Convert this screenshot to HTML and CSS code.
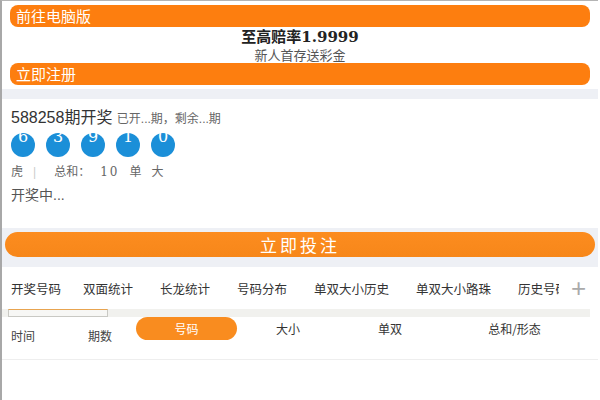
FILE: index.html
```html
<!DOCTYPE html>
<html lang="zh">
<head>
    <meta charset="UTF-8">
    <meta name="viewport" content="width=device-width, initial-scale=1.0">
    <title>开奖</title>
    <link rel="stylesheet" href="styles.css">
</head>
<body>
    <div class="page">
        <div class="top">
            <div class="bar-link">前往电脑版</div>
            <div class="promo">
                <div class="promo-title">至高赔率<span class="num">1.9999</span></div>
                <div class="promo-sub">新人首存送彩金</div>
            </div>
            <div class="bar-link">立即注册</div>
        </div>

        <div class="draw">
            <div class="draw-title">588258期开奖 <span class="draw-note">已开...期，剩余...期</span></div>
            <div class="balls">
                <span class="ball">6</span>
                <span class="ball">3</span>
                <span class="ball">9</span>
                <span class="ball">1</span>
                <span class="ball">0</span>
            </div>
            <div class="stats">
                <span>虎</span>
                <span class="sep">|</span>
                <span>总和：</span>
                <span class="serif">10</span>
                <span>单</span>
                <span>大</span>
            </div>
            <div class="status">开奖中...</div>
        </div>

        <div class="bet-wrap">
            <div class="bet-btn">立即投注</div>
        </div>

        <div class="tabs">
            <div class="tab-list">
                <span class="tab active">开奖号码</span>
                <span class="tab">双面统计</span>
                <span class="tab">长龙统计</span>
                <span class="tab">号码分布</span>
                <span class="tab">单双大小历史</span>
                <span class="tab">单双大小路珠</span>
                <span class="tab">历史号码</span>
            </div>
            <div class="tab-more">+</div>
        </div>
        <div class="scroll">
            <div class="scroll-thumb"></div>
        </div>

        <div class="table-head">
            <div class="cell low">时间</div>
            <div class="cell low">期数</div>
            <div class="cell center"><span class="pill">号码</span></div>
            <div class="cell center">大小</div>
            <div class="cell center">单双</div>
            <div class="cell center">总和/形态</div>
        </div>
    </div>
</body>
</html>
```

FILE: styles.css
```css
body {
    margin: 0;
    background: #ffffff;
    font-family: "Liberation Sans", "Noto Sans CJK SC", sans-serif;
    color: #333;
}

.page {
    border-left: 2px solid #a8a8a8;
    border-top: 1px solid #b4b4b4;
    margin-right: 2px;
    height: 399px;
    overflow: hidden;
}

.top {
    padding: 4px 8px 4px 8px;
}

.bar-link {
    background: #fd7e0f;
    color: #fff;
    height: 22px;
    line-height: 22px;
    border-radius: 8px;
    padding-left: 6px;
    font-size: 15px;
    font-family: "Noto Sans CJK SC", sans-serif;
}

.promo {
    text-align: center;
}

.promo-title {
    font-size: 15px;
    font-weight: bold;
    line-height: 17px;
    color: #222;
    font-family: "Noto Sans CJK SC", sans-serif;
}

.promo-title .num {
    font-family: "DejaVu Serif", serif;
}

.promo-sub {
    font-size: 13px;
    line-height: 17px;
    color: #555;
    font-family: "Noto Sans CJK SC", sans-serif;
}

.draw {
    border-top: 10px solid #eef0f5;
    padding: 9px 9px 0 9px;
    height: 120px;
}

.draw-title {
    font-size: 16px;
    line-height: 20px;
    color: #333;
}

.draw-note {
    font-size: 12px;
    color: #666;
}

.balls {
    display: flex;
    gap: 11px;
    margin-top: 4px;
}

.ball {
    width: 24px;
    height: 24px;
    border-radius: 50%;
    background: #1b8fd8;
    color: #fff;
    text-align: center;
    font-size: 16px;
    line-height: 8px;
    font-family: "DejaVu Serif", serif;
}

.stats {
    display: flex;
    gap: 10px;
    margin-top: 7px;
    font-size: 12px;
    line-height: 16px;
    color: #666;
}

.stats .sep {
    color: #ccc;
    margin-right: 8px;
}

.stats .serif {
    font-family: "DejaVu Serif", serif;
    letter-spacing: 2px;
}

.status {
    margin-top: 6px;
    font-size: 14px;
    line-height: 18px;
    color: #555;
}

.bet-wrap {
    background: #eef0f5;
    padding: 4px 3px 10px 3px;
}

.bet-btn {
    height: 25px;
    line-height: 25px;
    border-radius: 13px;
    background: linear-gradient(#fc8c1f, #f7871a);
    color: #fff;
    text-align: center;
    font-size: 17px;
    letter-spacing: 3px;
    font-family: "Noto Sans CJK SC", sans-serif;
}

.tabs {
    display: flex;
    height: 42px;
    align-items: center;
}

.tab-list {
    width: 548px;
    flex: none;
    display: flex;
    gap: 27px;
    padding-left: 9px;
    overflow: hidden;
    white-space: nowrap;
    height: 42px;
    align-items: center;
}

.tab {
    font-size: 12.5px;
    color: #333;
    font-family: "Noto Sans CJK SC", sans-serif;
    flex: none;
}

.tab.active {
    margin-right: -5px;
}

.tab-more {
    flex: 1;
    text-align: center;
    font-size: 26px;
    font-weight: 200;
    color: #aaa;
    line-height: 42px;
}

.scroll {
    height: 8px;
    background: #f1f1ee;
    margin-right: 8px;
}

.scroll-thumb {
    width: 98px;
    height: 6px;
    margin-left: 6px;
    background: #f7f7f5;
    border: 1px solid #c9c9c4;
    border-top-color: #e8a450;
}

.table-head {
    display: grid;
    grid-template-columns: 77px 48px 101px 102px 102px 1fr;
    padding: 0 10px 0 9px;
    height: 42px;
    border-bottom: 1px solid #eeeeee;
    font-size: 12px;
    font-family: "Noto Sans CJK SC", sans-serif;
}

.cell {
    color: #333;
    line-height: 23px;
}

.cell.low {
    padding-top: 7px;
    color: #444;
}

.cell.center {
    text-align: center;
}

.pill {
    display: block;
    height: 23px;
    border-radius: 12px;
    background: #f98c1f;
    color: #fff;
}
```
